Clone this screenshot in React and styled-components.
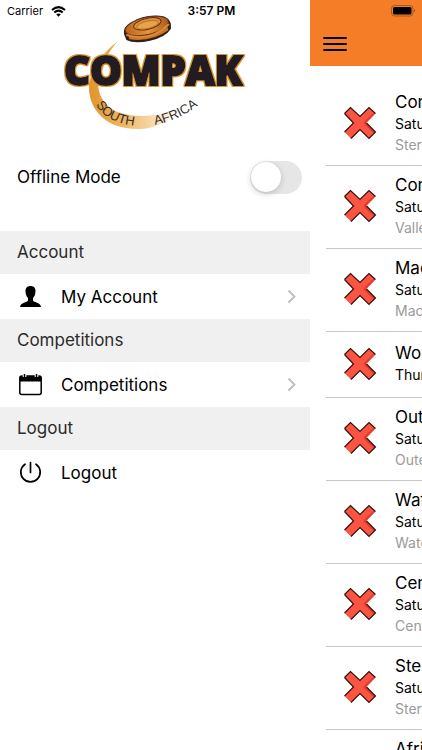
import React from "react";
import styled, { createGlobalStyle } from "styled-components";

const GlobalStyle = createGlobalStyle`
  *, *::before, *::after { box-sizing: border-box; }
  body {
    margin: 0;
    background: #fff;
    color: #000;
    font-family: Inter, "Liberation Sans", sans-serif;
  }
`;

const Screen = styled.div`
  position: relative;
  display: flex;
  height: 100vh;
  overflow: hidden;
`;

const StatusBar = styled.div`
  position: absolute;
  inset: 0 0 auto 0;
  z-index: 1;
  display: grid;
  grid-template-columns: 1fr auto 1fr;
  align-items: center;
  height: 22px;
  padding: 0 6px 0 7px;
  font-size: 11px;
  line-height: 22px;
`;

const Carrier = styled.span`
  display: flex;
  align-items: center;
  gap: 8px;
`;

const Clock = styled.time`
  font-size: 12px;
  font-weight: 600;
`;

const Battery = styled.svg`
  justify-self: end;
`;

const Drawer = styled.nav`
  flex: none;
  width: 310px;
  background: #fff;
`;

const Brand = styled.div`
  display: flex;
  justify-content: center;
  padding: 8px 0 0;

  svg { display: block; }
`;

const OfflineRow = styled.label`
  display: flex;
  align-items: center;
  justify-content: space-between;
  height: 86px;
  margin-bottom: 11px;
  padding: 0 8px 0 17px;
  font-size: 17px;
`;

const Switch = styled.input`
  appearance: none;
  display: flex;
  align-items: center;
  width: 52px;
  height: 33px;
  margin: 0;
  padding: 1px;
  border-radius: 17px;
  background: #e6e6e6;

  &::before {
    content: "";
    width: 30px;
    height: 30px;
    border-radius: 50%;
    background: #fff;
    box-shadow: 0 2px 6px rgba(0, 0, 0, 0.18);
  }

  &:checked { justify-content: flex-end; background: #f57d28; }
`;

const SectionTitle = styled.h2`
  margin: 0;
  padding: 0 17px;
  background: #f0f0f0;
  color: #2b2b2b;
  font-size: 17px;
  font-weight: 400;
  line-height: 43px;
`;

const MenuButton = styled.button`
  display: flex;
  align-items: center;
  gap: 19px;
  width: 100%;
  height: 45px;
  padding: 0 14px 0 19px;
  border: 0;
  background: #fff;
  color: #000;
  font: inherit;
  font-size: 17px;
  text-align: left;

  span { flex: 1; }
`;

const Main = styled.main`
  flex: 1;
  min-width: 0;
  overflow: hidden;
  background: #fff;
`;

const Header = styled.header`
  display: flex;
  align-items: flex-end;
  height: 66px;
  padding: 0 13px 13px;
  background: #f57d28;
`;

const IconButton = styled.button`
  display: flex;
  padding: 0;
  border: 0;
  background: none;
  color: #000;
`;

const List = styled.ul`
  margin: 0;
  padding: 17px 0 0 16px;
  list-style: none;
`;

const Item = styled.li`
  display: flex;
  align-items: center;
  gap: 18px;
  min-height: 66px;
  padding: 8px 0 10px 17px;
  border-bottom: 1px solid #c8c8c8;
  white-space: nowrap;

  svg { flex: none; }
`;

const Title = styled.h3`
  margin: 0;
  font-size: 17px;
  font-weight: 400;
  line-height: 22px;
`;

const When = styled.p`
  margin: 0;
  font-size: 14px;
  line-height: 22px;
`;

const Venue = styled.p`
  margin: 0;
  color: #9a9a9a;
  font-size: 14px;
  line-height: 20px;
`;

const WordMark = styled.text`
  font-family: "Open Sans", sans-serif;
  font-size: 40px;
  font-weight: 800;
  stroke-linejoin: miter;
  stroke-miterlimit: 3;
  paint-order: stroke;
`;

const Region = styled.text`
  font-family: "Liberation Sans", sans-serif;
  font-size: 13px;
`;

function Logo() {
  return (
    <svg width="190" height="126" viewBox="60 8 190 126" role="img" aria-label="Compak South Africa">
      <defs>
        <linearGradient id="swoosh" x1="88" x2="180" y1="0" y2="0" gradientUnits="userSpaceOnUse">
          <stop offset="0" stopColor="#e0932b" />
          <stop offset="0.4" stopColor="#efb765" />
          <stop offset="0.75" stopColor="#f9dfb4" />
          <stop offset="1" stopColor="#fff" />
        </linearGradient>
        <linearGradient id="clay" x1="0" x2="1" y1="0" y2="0">
          <stop offset="0" stopColor="#b9641d" />
          <stop offset="0.5" stopColor="#e39638" />
          <stop offset="1" stopColor="#b0591b" />
        </linearGradient>
        <path id="regionArc" d="M94 101 Q105 125 142 126 Q180 125 214 92" />
        <filter id="edge" x="-5%" y="-20%" width="110%" height="140%">
          <feMorphology in="SourceAlpha" operator="dilate" radius="1" result="grown" />
          <feFlood floodColor="#dc962f" />
          <feComposite in2="grown" operator="in" />
          <feMerge>
            <feMergeNode />
            <feMergeNode in="SourceGraphic" />
          </feMerge>
        </filter>
      </defs>
      <path d="M118 41 Q108 52 105 62 L98 84 Q99 102 115 111 Q142 122 180 109 Q165 127 142 129 Q112 130 98 113 Q88 101 89 84 Q95 58 118 41Z" fill="url(#swoosh)" />
      <g transform="rotate(-13 147 27)">
        <path d="M123 29 Q123 22 132 19 Q147 14 162 19 Q171 22 171 29 L170 34 Q163 41 147 41 Q131 41 124 35Z" fill="#32201c" />
        <path d="M127 30 Q147 41 167 30 L167 35 Q148 43 127 35Z" fill="#c87527" />
        <ellipse cx="147" cy="26" rx="22" ry="8.5" fill="url(#clay)" stroke="#6f351b" strokeWidth="0.8" />
        <path d="M125 30 Q147 43 169 29" fill="none" stroke="#da8b32" strokeWidth="2" />
        <ellipse cx="148" cy="24" rx="14" ry="5.5" fill="#dd9038" stroke="#5d2d1b" />
        <ellipse cx="148" cy="25" rx="11" ry="3.6" fill="#e8a24a" stroke="#b16421" strokeWidth="0.7" />
      </g>
      <WordMark x="64" y="85" fill="#231f20" stroke="#231f20" strokeWidth="2" filter="url(#edge)">COMPAK</WordMark>
      <Region fill="#302c2a">
        <textPath href="#regionArc" startOffset="4">SOUTH</textPath>
      </Region>
      <Region fill="#302c2a">
        <textPath href="#regionArc" startOffset="70">AFRICA</textPath>
      </Region>
    </svg>
  );
}

function WifiIcon() {
  return (
    <svg width="15" height="11" viewBox="0 0 15 11" fill="none" stroke="#000" strokeWidth="2" aria-hidden="true">
      <path d="M1 4 Q7.500 -1.800 14 4" />
      <path d="M3.300 6.500 Q7.500 2.800 11.700 6.500" />
      <path d="M5.200 8.300 Q7.500 6.500 9.800 8.300 L7.500 10.700Z" fill="#000" stroke="none" />
    </svg>
  );
}

function BatteryIcon() {
  return (
    <Battery width="25" height="12" viewBox="0 0 25 12" aria-hidden="true">
      <rect x="0.5" y="0.5" width="21.500" height="10.500" rx="3" fill="none" stroke="#a4571f" />
      <rect x="2" y="2" width="18.500" height="7.500" rx="1.500" />
      <path d="M23.200 4 Q25 5.700 23.200 7.500Z" fill="#754019" />
    </Battery>
  );
}

function PersonIcon() {
  return (
    <svg width="23" height="23" viewBox="0 0 23 23" aria-hidden="true">
      <path d="M11.500 1C8 1 6.300 3.200 6.500 6.500C6.600 9.500 7.500 11.500 9 13V15.500C8.500 17.500 1.500 17.500 1 22H22C21.500 17 14.500 17.500 14 15.500V13C15.500 11.500 16.400 9.500 16.500 6.500C16.700 3.200 15 1 11.500 1Z" />
    </svg>
  );
}

function CalendarIcon() {
  return (
    <svg width="23" height="23" viewBox="0 0 23 23" aria-hidden="true">
      <rect x="0.800" y="3" width="21.400" height="18.500" rx="2" fill="none" stroke="#000" strokeWidth="1.500" />
      <path d="M1 3H22V8.500H1Z" />
      <path d="M5.500 1.500V4M17.500 1.500V4" stroke="#fff" strokeWidth="3.600" />
      <path d="M5.500 1V4M17.500 1V4" stroke="#000" strokeWidth="1.500" />
    </svg>
  );
}

function PowerIcon() {
  return (
    <svg width="23" height="23" viewBox="0 0 23 23" fill="none" stroke="#000" strokeWidth="1.700" strokeLinecap="round" aria-hidden="true">
      <path d="M11.500 1.500V11.500M6 3.200A9.700 9.700 0 1 0 17 3.200" />
    </svg>
  );
}

function Chevron() {
  return (
    <svg width="9" height="15" viewBox="0 0 9 15" fill="none" stroke="#bdbdbd" strokeWidth="1.800" aria-hidden="true">
      <path d="M1.500 1.500L7.500 7.500L1.500 13.500" />
    </svg>
  );
}

function MenuIcon() {
  return (
    <svg width="24" height="18" viewBox="0 0 24 18" stroke="#000" strokeWidth="2" strokeLinecap="round" aria-hidden="true">
      <path d="M1 3H23M1 9H23M1 15H23" />
    </svg>
  );
}

function CrossIcon() {
  return (
    <svg width="34" height="34" viewBox="0 0 34 34" role="img" aria-label="Not entered">
      <path d="M7.500 1.500L17 10.500L26 1.500L32.500 7.500L23.500 17L32.500 26L26 32.500L17 23.500L8 32.500L1.500 26L10.500 17L1.500 7.500Z" fill="#fb5443" />
      <path d="M32 7.500L22.500 17L32 26L31 27.500L20.500 17.500Q21 15 31 6.500Z" fill="#d93c2e" />
      <path d="M1.500 7.500L7.500 1.500L17 10.500L26 1.500L32.500 7.500M1.500 26L10.500 17L1.500 7.500M8 32.500L17 23.500L26 32.500L32.500 26L23.500 17" fill="none" stroke="#35110d" strokeWidth="1.200" />
    </svg>
  );
}

const sections = [
  { title: "Account", label: "My Account", Icon: PersonIcon, chevron: true },
  { title: "Competitions", label: "Competitions", Icon: CalendarIcon, chevron: true },
  { title: "Logout", label: "Logout", Icon: PowerIcon, chevron: false },
];

const competitions = [
  { title: "Compak", when: "Saturday", venue: "Sterk" },
  { title: "Compak", when: "Saturday", venue: "Valley" },
  { title: "Mac", when: "Saturday", venue: "Mac" },
  { title: "World", when: "Thursday" },
  { title: "Outeniqua", when: "Saturday", venue: "Outeniqua" },
  { title: "Water", when: "Saturday", venue: "Water" },
  { title: "Central", when: "Saturday", venue: "Central" },
  { title: "Sterk", when: "Saturday", venue: "Sterk" },
  { title: "African", when: "Saturday", venue: "African" },
];

export default function App() {
  return (
    <Screen>
      <GlobalStyle />
      <StatusBar>
        <Carrier>Carrier <WifiIcon /></Carrier>
        <Clock>3:57 PM</Clock>
        <BatteryIcon />
      </StatusBar>
      <Drawer>
        <Brand><Logo /></Brand>
        <OfflineRow>
          Offline Mode
          <Switch type="checkbox" role="switch" />
        </OfflineRow>
        {sections.map(({ title, label, Icon, chevron }) => (
          <section key={title}>
            <SectionTitle>{title}</SectionTitle>
            <MenuButton type="button">
              <Icon />
              <span>{label}</span>
              {chevron && <Chevron />}
            </MenuButton>
          </section>
        ))}
      </Drawer>
      <Main>
        <Header>
          <IconButton type="button" aria-label="Menu"><MenuIcon /></IconButton>
        </Header>
        <List>
          {competitions.map(({ title, when, venue }, index) => (
            <Item key={index}>
              <CrossIcon />
              <div>
                <Title>{title}</Title>
                <When>{when}</When>
                {venue && <Venue>{venue}</Venue>}
              </div>
            </Item>
          ))}
        </List>
      </Main>
    </Screen>
  );
}
